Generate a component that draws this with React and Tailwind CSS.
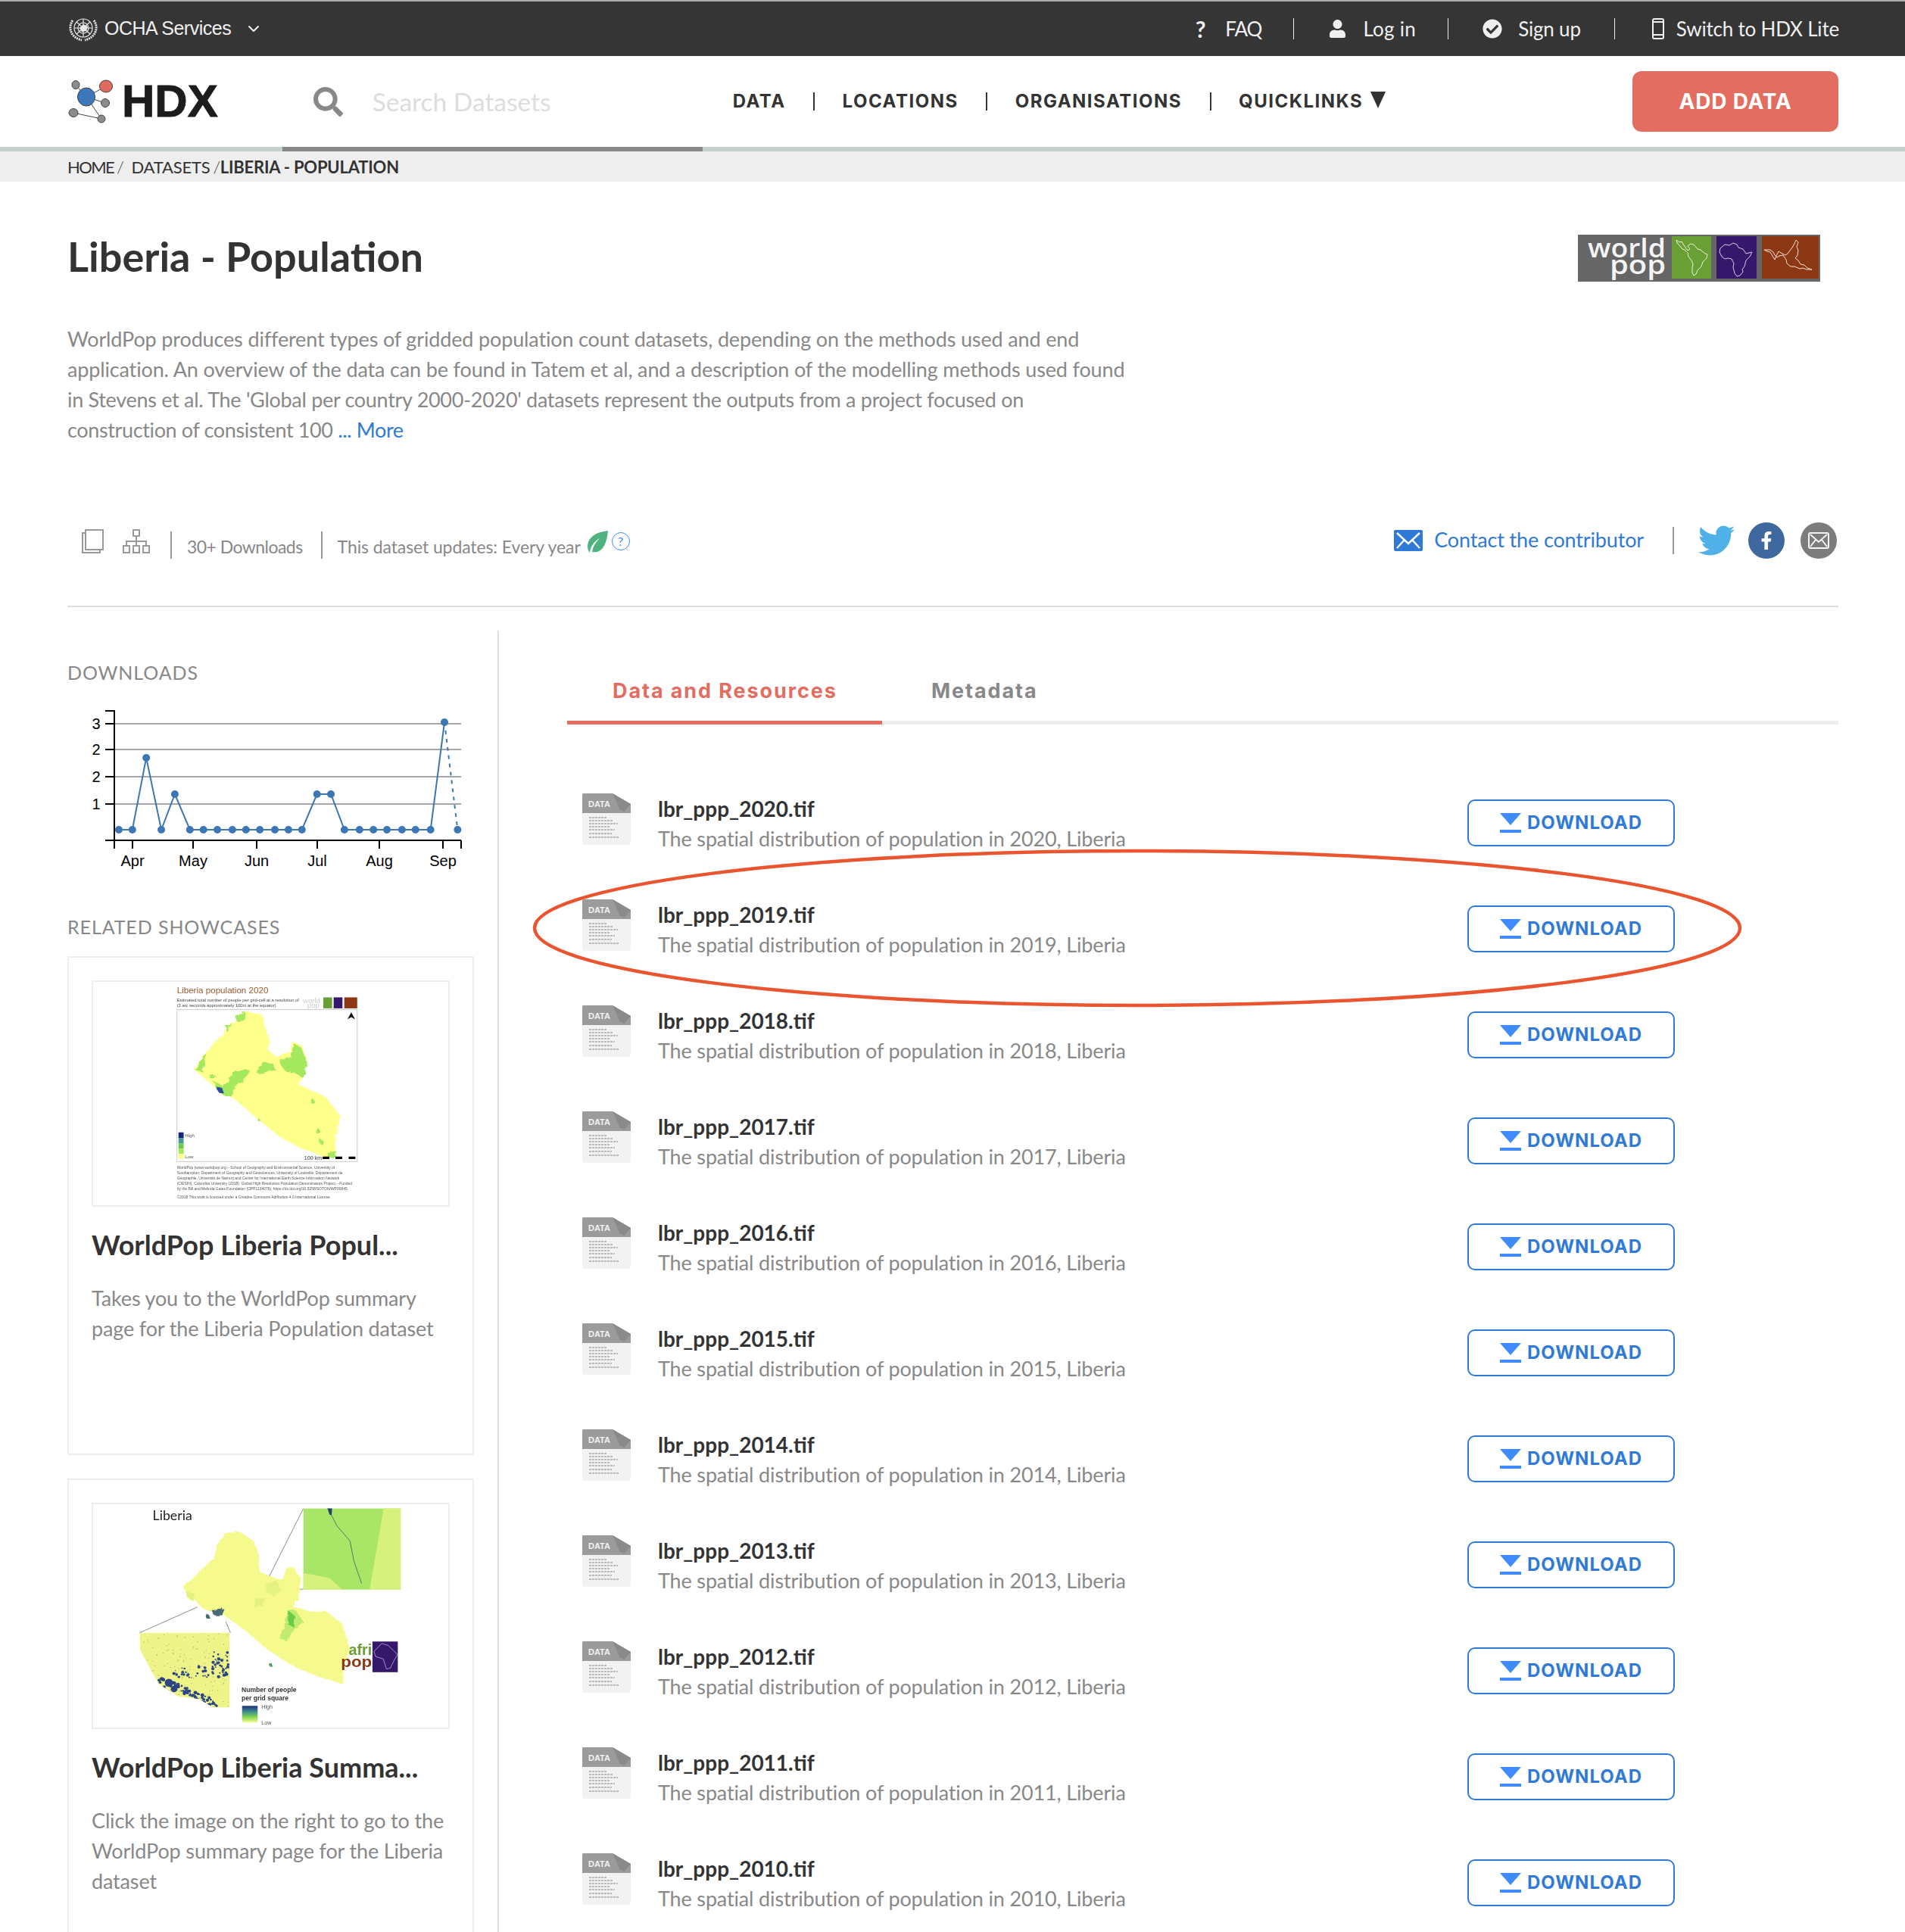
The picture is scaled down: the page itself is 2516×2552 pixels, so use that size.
import React from 'react';
import { FaCheckCircle, FaFacebookF, FaSearch, FaTwitter, FaUser } from 'react-icons/fa';
import { ChevronDown } from 'lucide-react';

const years = [2020, 2019, 2018, 2017, 2016, 2015, 2014, 2013, 2012, 2011, 2010];

const chartX = [190, 225, 261, 300, 335, 374, 409, 445, 484, 519, 555, 594, 629, 664, 703, 739, 774, 813, 849, 884, 923, 958, 997, 1033];
const chartPeaks = { 261: 1000, 335: 1048, 703: 1048, 739: 1048, 1033: 953 };
const chartPoints = chartX.map((x) => ({ x: x / 1.96 + 60 - 130, y: (chartPeaks[x] || 1095) - 930 }));

// repeatable noise, so the map inset looks scattered rather than gridded
const noise = (n) => {
  const v = Math.sin(n * 12.9898) * 43758.5453;
  return v - Math.floor(v);
};
const specks = Array.from({ length: 150 }, (_, i) => ({
  x: 272 + noise(i + 1) * 348,
  y: 625 + noise(i + 500) * 300,
}));
const coastDots = Array.from({ length: 80 }, (_, i) => {
  const t = noise(i + 1000);
  return {
    x: 345 + t * 225,
    y: 815 + t * 100 + (noise(i + 1500) - 0.5) * 34,
    r: 2.5 + noise(i + 2000) * 5,
  };
});
const townDots = Array.from({ length: 70 }, (_, i) => ({
  x: i % 2 ? 540 + noise(i + 3000) * 75 : 400 + noise(i + 3500) * 170,
  y: i % 2 ? 700 + noise(i + 4000) * 105 : 755 + noise(i + 4500) * 50,
  r: 2 + noise(i + 5000) * 4.5,
}));

function UnEmblem() {
  return (
    <svg width="42" height="36" viewBox="0 0 42 36" fill="none" stroke="#e8e8e8" strokeWidth="1.2">
      <circle cx="21" cy="17" r="12" />
      <circle cx="21" cy="17" r="7" />
      <path d="M21 5v24M9 17h24M12 9l18 16M30 9L12 25" />
      <path d="M21 12l6 3-2 6-6 1-3-5z" fill="#e8e8e8" stroke="none" />
      <path d="M7 7C1 15 3 29 19 33M35 7c6 8 4 22-12 26" strokeWidth="3" strokeDasharray="2 1" />
    </svg>
  );
}

function HdxMark() {
  return (
    <svg width="60" height="60" viewBox="88 104 60 60" stroke="#444" strokeWidth="1">
      <path d="M99 112l14 16M139 114l-26 14M113 128l25 8M113 128l20 29M96 149l37 8" fill="none" />
      <ellipse cx="99" cy="112" rx="5" ry="5.5" fill="#8c8c8c" />
      <ellipse cx="139" cy="114" rx="8.5" ry="8" fill="#e2695e" />
      <ellipse cx="113" cy="128" rx="11.5" ry="12" fill="#3f77bc" />
      <ellipse cx="138" cy="136" rx="5.5" ry="5.5" fill="#8c8c8c" />
      <ellipse cx="96" cy="149" rx="6" ry="5.5" fill="#8c8c8c" />
      <ellipse cx="133" cy="157" rx="5" ry="5" fill="#8c8c8c" />
    </svg>
  );
}

function WorldPopLogo() {
  return (
    <svg width="320" height="62" viewBox="0 0 320 62">
      <rect width="320" height="62" fill="#666" />
      <g fontSize="35" fontWeight="600" fill="#f4f4f4" fontFamily="Open Sans, sans-serif">
        <text x="13" y="30" textLength="103" lengthAdjust="spacingAndGlyphs">world</text>
        <text x="42" y="52" textLength="74" lengthAdjust="spacingAndGlyphs">pop</text>
      </g>
      <rect x="124" y="2" width="52" height="56" fill="#6a9f36" />
      <rect x="183" y="2" width="53" height="56" fill="#35186b" />
      <rect x="243" y="2" width="75" height="56" fill="#8c3815" />
      <g fill="none" strokeWidth="1">
        <path d="M130 7l4 3 3-1 3 5 5 7 3-2-3-4 4-3 4 1 5 6 4 1 6 5 3 1-1 5-5 5-2 6-5 5-2 5-3 2-2-4 0-6 1-5-2-5-4-5-1-5-4-4-3-1-4-5-3-3z" stroke="#e9f2da" />
        <path d="M187 23l1-5 6-5 6 1 5-3 5 2 2 4 6 2 4 6 8-2-3 6-5 5-2 8-3 4 1 3-4 5-4 1-3-4-2-8 1-5-3-6-5-1-4 1-4-3z" stroke="#d9c8ec" />
        <path d="M246 20l4 2 4 1 3 5 3 5 2-5 3-6 5 3 4 2 3-2 6-8 3-5 2-5 3 3-2 6 2 5-1 6-3 4 4 3 3 5 5 1 4 4 6 2-7 0-5-2-4 1-7-3-5 0-5-4-1-5-4-6-5 1-3 2-3-3-2-4-4-3z" stroke="#f4dfd2" />
      </g>
    </svg>
  );
}

function DataIcon() {
  return (
    <svg width="64" height="68" viewBox="0 0 64 68" className="shrink-0">
      <path d="M2 0h38l24 14v50a4 4 0 0 1-4 4H4a4 4 0 0 1-4-4V2a2 2 0 0 1 2-2z" fill="#f2f2f2" />
      <path d="M2 0h38l24 14v12H0V2a2 2 0 0 1 2-2z" fill="#9b9b9b" />
      <path d="M40 0l24 14-8 10-6-2z" fill="#8a8a8a" />
      <text x="8" y="18" fontSize="11" fontWeight="700" fill="#f2f2f2" fontFamily="Liberation Sans, sans-serif">DATA</text>
      <path d="M9 32h24M9 36h32M9 40h38M9 44h28M9 48h34M9 53h30M9 58h40" stroke="#a8a8a8" strokeWidth="1.4" strokeDasharray="3 1" />
    </svg>
  );
}

function EnvelopeSquare() {
  return (
    <svg width="38" height="28" viewBox="0 0 38 28">
      <rect width="38" height="28" rx="2" fill="#2f7ad9" />
      <path d="M4 4l15 14L34 4M4 24l10-11M34 24L24 13" fill="none" stroke="#fff" strokeWidth="2.4" />
    </svg>
  );
}

function DownloadChart() {
  const last = chartPoints[chartPoints.length - 1];
  const end = { x: 1067 / 1.96 + 60 - 130, y: 165 };
  return (
    <svg width="520" height="225" viewBox="-20 0 520 225" className="block">
      {[25, 59, 95, 131].map((y) => (
        <path key={y} d={`M21 ${y}H479`} stroke="#a6a6a6" strokeWidth="2" />
      ))}
      <path d="M9 8H21V179M9 25H21M9 59H21M9 95H21M9 131H21M9 179H479" fill="none" stroke="#000" strokeWidth="2" />
      {[21, 45, 125, 209, 289, 371, 455, 479].map((x) => (
        <path key={x} d={`M${x} 179v11`} stroke="#000" strokeWidth="2" />
      ))}
      <polyline points={chartPoints.map((p) => `${p.x},${p.y}`).join(' ')} fill="none" stroke="#3c77b4" strokeWidth="2" />
      <path d={`M${last.x} ${last.y}L${end.x} ${end.y}`} stroke="#3c77b4" strokeWidth="2" strokeDasharray="5 6" />
      {[...chartPoints, end].map((p) => (
        <circle key={p.x} cx={p.x} cy={p.y} r="5" fill="#3c77b4" />
      ))}
      <g fontSize="20" fill="#000" fontFamily="Liberation Sans, sans-serif">
        {[['3', 32], ['2', 66], ['2', 102], ['1', 138]].map(([t, y]) => (
          <text key={y} x="-3" y={y} textAnchor="middle">{t}</text>
        ))}
        {[['Apr', 45], ['May', 125], ['Jun', 209], ['Jul', 289], ['Aug', 371], ['Sep', 455]].map(([t, x]) => (
          <text key={t} x={x} y="213" textAnchor="middle">{t}</text>
        ))}
      </g>
    </svg>
  );
}

function PopulationMap() {
  return (
    <svg viewBox="92 110 1373 895" preserveAspectRatio="none" className="block w-full h-full blur-[0.5px]" fontFamily="Liberation Sans, sans-serif">
      <defs>
        <filter id="rough1" x="-5%" y="-5%" width="110%" height="110%">
          <feTurbulence type="fractalNoise" baseFrequency="0.06" numOctaves="3" seed="4" />
          <feDisplacementMap in="SourceGraphic" scale="16" />
        </filter>
      </defs>
      <text x="416" y="155" fontSize="34" fill="#9a5a2c">Liberia population 2020</text>
      <text x="416" y="188" fontSize="17" fill="#444">Estimated total number of people per grid-cell at a resolution of</text>
      <text x="416" y="209" fontSize="17" fill="#444">(3 arc seconds approximately 100m at the equator)</text>
      <text x="903" y="195" fontSize="28" fill="#ccc">world</text>
      <text x="920" y="213" fontSize="28" fill="#ccc">pop</text>
      <rect x="982" y="172" width="34" height="44" fill="#6a9f36" />
      <rect x="1022" y="172" width="34" height="44" fill="#35186b" />
      <rect x="1063" y="172" width="50" height="44" fill="#8c3815" />
      <rect x="416" y="221" width="697" height="609" fill="#fff" stroke="#ccc" strokeWidth="3" />
      <path d="M1090 232l-15 28 15-9 15 9z" fill="#111" />
      <g filter="url(#rough1)">
        <path d="M645 240l35-12 65 12 15 60 15 50-10 30 35 30 50-20 15-40 35 15 20 65-15 60-20 30 105 50 60 80-20 90v60l-30 15-100-35-80-45-80-65-100-90-50-25-110-95 50-70 70-80 10-25 35-15z" fill="#ffff8c" />
        <path d="M645 240l35-10-5 35-30 5zM605 285l25-5-25 30zM530 395l-30 45-15 22 30 8 10-40zM545 480l20 5-10 12-15-5zM560 510l30 15 20-10 20-40 40-15 30 5-30 45-30 20-15 40-30-5-30-30zM720 470l30-40 40 10 10 25-40 5-25 10zM810 425l40-10 20-55 25 10 25 65-15 60-40-25-20 5-20-20zM960 697a10 10 0 1 0 1 0zM965 735l20 15-5 15-15-10zM1000 790l25-5 5 30-30 0zM725 650l20 20-15-2zM940 575l12 20-18 2z" fill="#a4e85e" />
      </g>
      <path d="M570 530l20 5 8 22-18-2-10-15z" fill="#2b4a9c" />
      <rect x="422" y="713" width="20" height="22" fill="#16247c" />
      <rect x="422" y="735" width="20" height="22" fill="#4e9a92" />
      <rect x="422" y="757" width="20" height="21" fill="#6dcb53" />
      <rect x="422" y="778" width="20" height="21" fill="#a4e85e" />
      <rect x="422" y="799" width="20" height="21" fill="#ffff8c" />
      <text x="447" y="732" fontSize="18" fill="#555">High</text>
      <text x="447" y="816" fontSize="18" fill="#555">Low</text>
      <text x="908" y="824" fontSize="21" fill="#333">100 km</text>
      <path d="M979 815h26M1029 815h26M1080 815h26" stroke="#000" strokeWidth="10" />
      <g fontSize="14.5" fill="#555">
        <text x="416" y="860">WorldPop (www.worldpop.org – School of Geography and Environmental Science, University of</text>
        <text x="416" y="881">Southampton; Department of Geography and Geosciences, University of Louisville; Département de</text>
        <text x="416" y="903">Géographie, Université de Namur) and Center for International Earth Science Information Network</text>
        <text x="416" y="924">(CIESIN), Columbia University (2018). Global High Resolution Population Denominators Project – Funded</text>
        <text x="416" y="945">by the Bill and Melinda Gates Foundation (OPP1134076). https://dx.doi.org/10.5258/SOTON/WP00645</text>
        <text x="416" y="977">©2018 This work is licensed under a Creative Commons Attribution 4.0 International License</text>
      </g>
    </svg>
  );
}

function SummaryMap() {
  return (
    <svg viewBox="92 110 1373 895" preserveAspectRatio="none" className="block w-full h-full blur-[0.5px]" fontFamily="Liberation Sans, sans-serif">
      <defs>
        <filter id="rough2" x="-5%" y="-5%" width="110%" height="110%">
          <feTurbulence type="fractalNoise" baseFrequency="0.05" numOctaves="3" seed="9" />
          <feDisplacementMap in="SourceGraphic" scale="14" />
        </filter>
        <clipPath id="insetClip">
          <path d="M272 625H620V925H560L500 890 420 880 345 830 272 690z" />
        </clipPath>
        <linearGradient id="legend" x1="0" y1="0" x2="0" y2="1">
          <stop offset="0" stopColor="#1c2f78" />
          <stop offset="0.35" stopColor="#3f8f8f" />
          <stop offset="0.65" stopColor="#7ad34f" />
          <stop offset="1" stopColor="#fdfd96" />
        </linearGradient>
      </defs>
      <text x="322" y="175" fontSize="52" fill="#222" fontFamily="Lato, sans-serif">Liberia</text>
      <path d="M770 405L905 127M815 455l90-5M495 522L272 625M605 580l18 45" stroke="#777" strokeWidth="2.5" />
      <g filter="url(#rough2)">
        <path d="M600 225l60-5 55 40 15 50 5 70 30 15 30 10 30 5 15-45 25-5 30 50-5 70-25 40 70 20 60 0 60 50 30 100-25 70-1 70-100-30-90-40-100-65-90-80-80-60-80-25-80-85 60-60 60-60 10-50z" fill="#f6f98c" />
        <path d="M845 535l30 0 30 45-35 30-30 50-30-15 20-40z" fill="#c0ea70" />
        <path d="M845 535l25 20 0 50-25-15z" fill="#68cc48" />
        <path d="M760 430l40-15 20 40-30 25-30-20zM450 455l35 15-5 30-25-15zM720 490l40-5-15 30-30 10z" fill="#e4f284" />
        <path d="M525 548l15 5 5 15-15 0zM550 535l50-5-10 25-30 0z" fill="#4a6a70" />
        <path d="M770 745l15 3 3 14-15-2z" fill="#5aa660" />
      </g>
      <rect x="905" y="127" width="376" height="325" fill="#a9e567" />
      <path d="M1215 127h66v325h-120zM905 385l100 20 50 47H905z" fill="#d8f07c" />
      <path d="M1000 127l15 30 20 40 50 60 15 80 30 90" fill="none" stroke="#3d6a5a" strokeWidth="2.5" />
      <path d="M998 127h18l-2 28-8-4z" fill="#27406f" />
      <g clipPath="url(#insetClip)">
        <rect x="272" y="625" width="348" height="300" fill="#eef487" />
        {specks.map((s) => (
          <circle key={`${s.x}-${s.y}`} cx={s.x} cy={s.y} r="1.8" fill="#6f8a78" opacity="0.7" />
        ))}
        {[...coastDots, ...townDots].map((d) => (
          <circle key={`${d.x}-${d.y}`} cx={d.x} cy={d.y} r={d.r} fill="#2d4585" />
        ))}
        <circle cx="385" cy="825" r="16" fill="#2d4585" />
        <circle cx="405" cy="850" r="13" fill="#2d4585" />
      </g>
      <text x="666" y="863" fontSize="25" fontWeight="700" fill="#333">Number of people</text>
      <text x="666" y="895" fontSize="25" fontWeight="700" fill="#333">per grid square</text>
      <rect x="668" y="918" width="60" height="67" fill="url(#legend)" />
      <text x="743" y="928" fontSize="21" fill="#555">High</text>
      <text x="743" y="993" fontSize="21" fill="#555">Low</text>
      <text x="1080" y="714" fontSize="64" fontWeight="700" fill="#6a9f36" textLength="90" lengthAdjust="spacingAndGlyphs">afri</text>
      <text x="1050" y="762" fontSize="64" fontWeight="700" fill="#8c3815" textLength="120" lengthAdjust="spacingAndGlyphs">pop</text>
      <rect x="1172" y="660" width="98" height="123" fill="#35186b" />
      <path d="M1178 700l30-32 25 8 20 20 16 16-14 25-14 30-15 3-12-40-30-10z" fill="none" stroke="#d9c8ec" strokeWidth="2" />
    </svg>
  );
}

function ShowcaseCard({ title, lines, heightClass, map }) {
  return (
    <div className={`border-2 border-[#eee] px-[30px] pt-[30px] ${heightClass}`}>
      <div className="h-[299px] border-2 border-[#eee] bg-white">{map}</div>
      <h3 className="mt-[30px] text-[36px] leading-[40px] font-bold text-[#333] whitespace-nowrap">{title}</h3>
      <div className="mt-[31px] text-[27px] tracking-[-0.15px] leading-[40px] text-[#888] whitespace-nowrap">
        {lines.map((line) => (
          <p key={line}>{line}</p>
        ))}
      </div>
    </div>
  );
}

function ResourceRow({ year }) {
  return (
    <div className="flex items-start h-[140px]">
      <DataIcon />
      <div className="ml-[36px] flex-1">
        <div className="text-[28px] leading-[40px] font-bold text-[#333]">lbr_ppp_{year}.tif</div>
        <div className="text-[27px] tracking-[-0.15px] leading-[40px] text-[#888]">The spatial distribution of population in {year}, Liberia</div>
      </div>
      <button className="mt-[8px] mr-[216px] w-[274px] h-[62px] flex items-center justify-center gap-[8px] border-2 border-[#2f7ad9] rounded-[10px] bg-white text-[#2f7ad9] text-[24px] tracking-[1px] font-['Inter',sans-serif] font-bold">
        <svg width="28" height="26" viewBox="0 0 28 26">
          <path d="M0 0h28L14 16z" fill="#3d8bfd" />
          <rect y="22" width="28" height="4" fill="#3d8bfd" />
        </svg>
        DOWNLOAD
      </button>
    </div>
  );
}

export default function App() {
  const navLink = "font-['Inter',sans-serif] font-bold text-[24px] tracking-[1.5px] text-[#333]";
  const navSep = 'mx-[36.5px] w-[2px] h-[24px] bg-[#333]';
  const sectionLabel = 'text-[25px] leading-[30px] tracking-[0.9px] text-[#888]';
  return (
    <div className="relative h-[2552px] overflow-hidden bg-white font-['Lato',sans-serif]">
      {/* OCHA bar */}
      <div className="h-[74px] border-t-2 border-[#aaa] bg-[#353535] pl-[89px] pr-[87px] flex items-center text-[#f0f0f0]">
        <UnEmblem />
        <span className="ml-[7px] font-['Liberation_Sans',sans-serif] text-[25px] tracking-[-0.5px]">OCHA Services</span>
        <ChevronDown className="ml-[18px] w-[24px] h-[24px]" />
        <div className="ml-auto flex items-center text-[26px] tracking-[-0.2px]">
          <span className="font-bold text-[30px]">?</span>
          <span className="ml-[26px] tracking-[-1px]">FAQ</span>
          <span className="ml-[42px] w-[1px] h-[28px] bg-[#eee]"></span>
          <FaUser className="ml-[47px] w-[21px] h-[24px]" />
          <span className="ml-[23px] tracking-[0.3px]">Log in</span>
          <span className="ml-[42px] w-[1px] h-[28px] bg-[#eee]"></span>
          <FaCheckCircle className="ml-[45px] w-[26px] h-[26px]" />
          <span className="ml-[21px]">Sign up</span>
          <span className="ml-[44px] w-[1px] h-[28px] bg-[#eee]"></span>
          <svg width="16" height="28" viewBox="0 0 16 28" fill="none" stroke="#f0f0f0" strokeWidth="2" className="ml-[49px]">
            <rect x="1" y="1" width="14" height="26" rx="2" />
            <path d="M1 5h14M1 22h14" />
          </svg>
          <span className="ml-[16px]">Switch to HDX Lite</span>
        </div>
      </div>

      {/* Main nav */}
      <div className="relative h-[126px] border-b-[6px] border-[#c5cfcc] pl-[89px] pr-[88px] flex items-center">
        <HdxMark />
        <span className="ml-[12px] font-['Liberation_Sans',sans-serif] font-bold text-[60px] leading-none text-[#1c1c1c] [-webkit-text-stroke:1px_#1c1c1c]">HDX</span>
        <FaSearch className="ml-[126px] w-[39px] h-[39px] text-[#888]" />
        <span className="ml-[39px] w-[238px] text-[33.5px] text-[#ddd] whitespace-nowrap">Search Datasets</span>
        <div className="ml-[238px] flex items-center">
          <span className={navLink}>DATA</span>
          <span className={navSep}></span>
          <span className={navLink}>LOCATIONS</span>
          <span className={navSep}></span>
          <span className={navLink}>ORGANISATIONS</span>
          <span className={navSep}></span>
          <span className={navLink}>QUICKLINKS</span>
          <svg width="20" height="22" viewBox="0 0 20 22" className="ml-[10px] -mt-[4px]">
            <path d="M0 0h20L10 22z" fill="#333" />
          </svg>
        </div>
        <button className="ml-auto w-[272px] h-[80px] rounded-[12px] bg-[#e26d60] text-white text-[28px] tracking-[0.8px] font-['Inter',sans-serif] font-bold">ADD DATA</button>
        <div className="absolute left-[373px] bottom-[-6px] w-[555px] h-[6px] bg-[#888]"></div>
      </div>

      {/* Breadcrumb */}
      <div className="h-[40px] bg-[#eee] pl-[89px] flex items-center text-[22px] tracking-[-0.2px] text-[#333]">
        <span className="tracking-[-1.6px]">HOME</span>
        <span className="ml-[4px] font-light">/</span>
        <span className="ml-[10px]">DATASETS</span>
        <span className="ml-[4px] font-light">/</span>
        <span className="font-bold">LIBERIA - POPULATION</span>
      </div>

      <div className="pl-[89px] pr-[88px]">
        {/* Title and description */}
        <div className="flex items-start justify-between pt-[69px] h-[350px]">
          <div>
            <h1 className="text-[54px] leading-[60px] font-bold text-[#333]">Liberia - Population</h1>
            <div className="mt-[59px] text-[27px] tracking-[-0.15px] leading-[40px] text-[#888] whitespace-nowrap">
              <p>WorldPop produces different types of gridded population count datasets, depending on the methods used and end</p>
              <p>application. An overview of the data can be found in Tatem et al, and a description of the modelling methods used found</p>
              <p className="tracking-[-0.3px]">in Stevens et al. The 'Global per country 2000-2020' datasets represent the outputs from a project focused on</p>
              <p className="tracking-[-0.37px]">construction of consistent 100 <span className="text-[#2f7ad9]">... More</span></p>
            </div>
          </div>
          <div className="mr-[24px] mt-[1px]">
            <WorldPopLogo />
          </div>
        </div>

        {/* Meta row */}
        <div className="flex items-center h-[212px] pt-[40px] border-b-2 border-[#ddd]">
          <svg width="29" height="32" viewBox="0 0 29 32" fill="none" stroke="#999" strokeWidth="2" className="ml-[19px]">
            <rect x="5" y="1" width="23" height="26" />
            <path d="M5 5H1v26h23v-4" />
          </svg>
          <svg width="36" height="32" viewBox="0 0 36 32" fill="none" stroke="#999" strokeWidth="2" className="ml-[25px]">
            <rect x="14" y="1" width="8" height="8" />
            <rect x="1" y="22" width="8" height="9" />
            <rect x="14" y="22" width="8" height="9" />
            <rect x="27" y="22" width="8" height="9" />
            <path d="M18 9v13M5 22v-6h26v6" />
          </svg>
          <span className="ml-[27px] mt-[10px] w-[2px] h-[36px] bg-[#999]"></span>
          <span className="ml-[20px] mt-[14px] text-[23px] tracking-[-0.55px] text-[#888] whitespace-nowrap">30+ Downloads</span>
          <span className="ml-[24px] mt-[10px] w-[2px] h-[36px] bg-[#999]"></span>
          <span className="ml-[20px] mt-[14px] text-[23px] tracking-[-0.1px] text-[#888] whitespace-nowrap">This dataset updates: Every year</span>
          <svg width="28" height="29" viewBox="0 0 28 29" className="ml-[8px]">
            <path d="M28 0C12 2 2 8 1 20c0 4 1 7 3 9 1-9 6-15 13-19-5 5-9 11-10 18 11 2 19-6 21-28z" fill="#4fb27f" />
          </svg>
          <span className="ml-[5px] w-[24px] h-[24px] rounded-full border border-[#3d8bfd] text-[#3d8bfd] text-[16px] leading-[22px] text-center">?</span>
          <div className="ml-auto flex items-center pr-[2px] -mt-[3px]">
            <EnvelopeSquare />
            <span className="ml-[15px] text-[27px] tracking-[-0.15px] text-[#2f7ad9] whitespace-nowrap">Contact the contributor</span>
            <span className="ml-[38px] w-[2px] h-[36px] bg-[#999]"></span>
            <FaTwitter className="ml-[32px] w-[48px] h-[48px] text-[#50b0e8]" />
            <span className="ml-[18px] w-[48px] h-[48px] rounded-full bg-[#3f689f] flex items-center justify-center">
              <FaFacebookF className="w-[22px] h-[24px] text-white" />
            </span>
            <span className="ml-[21px] w-[48px] h-[48px] rounded-full bg-[#7c7c7c] flex items-center justify-center">
              <svg width="28" height="22" viewBox="0 0 28 22" fill="none" stroke="#f3f3f3" strokeWidth="2">
                <rect x="1" y="1" width="26" height="20" rx="2" />
                <path d="M3 3l11 10L25 3M3 19l7-9M25 19l-7-9" />
              </svg>
            </span>
          </div>
        </div>

        {/* Body */}
        <div className="flex items-start mt-[31px]">
          <aside className="w-[570px] h-[1720px] border-r-2 border-[#ddd] shrink-0 pr-[31px]">
            <h2 className={`mt-[40px] ${sectionLabel}`}>DOWNLOADS</h2>
            <div className="mt-[28px] ml-[21px] w-[520px]">
              <DownloadChart />
            </div>
            <h2 className={`mt-[53px] ${sectionLabel}`}>RELATED SHOWCASES</h2>
            <div className="mt-[24px] flex flex-col gap-[31px]">
              <ShowcaseCard
                title="WorldPop Liberia Popul..."
                lines={['Takes you to the WorldPop summary', 'page for the Liberia Population dataset']}
                heightClass="h-[659px]"
                map={<PopulationMap />}
              />
              <ShowcaseCard
                title="WorldPop Liberia Summa..."
                lines={['Click the image on the right to go to the', 'WorldPop summary page for the Liberia', 'dataset']}
                heightClass="h-[700px]"
                map={<SummaryMap />}
              />
            </div>
          </aside>

          <main className="flex-1 pl-[90px]">
            {/* Tabs */}
            <div className="mt-[30px] flex h-[94px] border-b-[5px] border-[#eee]">
              <div className="w-[416px] h-[94px] pl-[60px] pt-[30px] text-[27px] leading-[40px] font-['Inter',sans-serif] font-bold tracking-[1.9px] text-[#e26d60] border-b-[5px] border-[#e26d60] whitespace-nowrap">Data and Resources</div>
              <div className="pl-[65px] pt-[30px] text-[27px] leading-[40px] font-['Inter',sans-serif] font-bold tracking-[1.9px] text-[#888]">Metadata</div>
            </div>
            {/* Resources */}
            <div className="mt-[91px] pl-[20px]">
              {years.map((year) => (
                <ResourceRow key={year} year={year} />
              ))}
            </div>
          </main>
        </div>
      </div>

      {/* Hand-drawn highlight round the 2019 row */}
      <svg width="1600" height="212" viewBox="0 0 1600 212" fill="none" className="absolute left-[702px] top-[1120px] pointer-events-none">
        <ellipse cx="800" cy="106" rx="796" ry="102" stroke="#ea5530" strokeWidth="4.5" />
      </svg>
    </div>
  );
}
